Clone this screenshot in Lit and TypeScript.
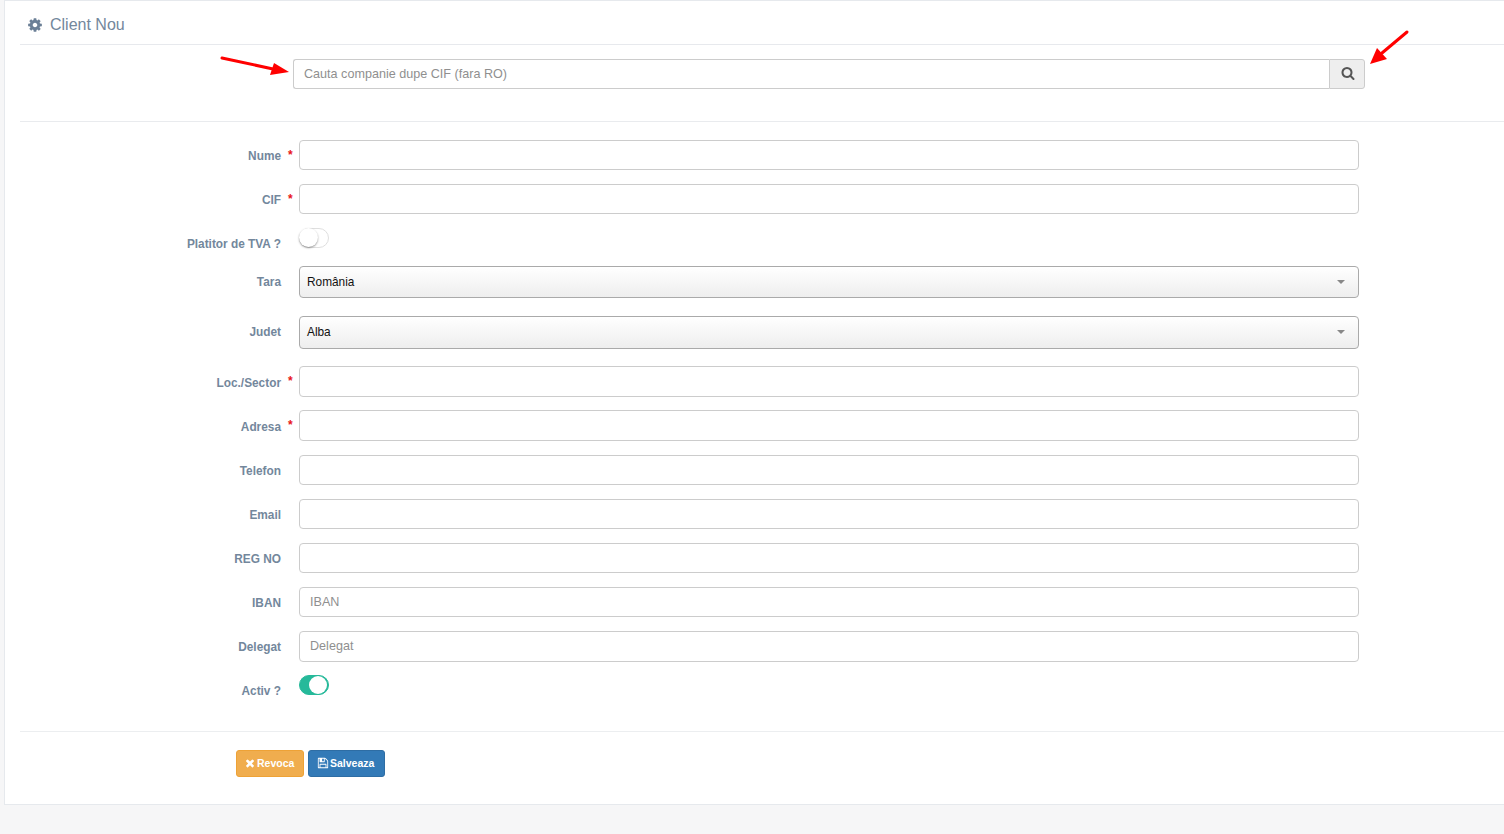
import { LitElement, html, css, svg } from "lit";
import { customElement } from "lit/decorators.js";

const COG = "M1152 896q0-106-75-181t-181-75-181 75-75 181 75 181 181 75 181-75 75-181zm512-109v222q0 12-8 23t-20 13l-185 28q-19 54-39 91 35 50 107 138 10 12 10 25t-9 23q-27 37-99 108t-94 71q-12 0-26-9l-138-108q-44 23-91 38-16 136-29 186-7 28-36 28h-222q-14 0-24.500-8.500t-11.500-21.500l-28-184q-49-16-90-37l-141 107q-10 9-25 9-14 0-25-11-126-114-165-168-7-10-7-23 0-12 8-23 15-21 51-66.500t54-70.500q-27-50-41-99l-183-27q-13-2-21-12.500t-8-23.500v-222q0-12 8-23t19-13l186-28q14-46 39-92-40-57-107-138-10-12-10-24 0-10 9-23 26-36 98.500-107.500t94.500-71.500q13 0 26 10l138 107q44-23 91-38 16-136 29-186 7-28 36-28h222q14 0 24.500 8.500t11.500 21.500l28 184q49 16 90 37l142-107q9-9 24-9 13 0 25 10 129 119 165 170 7 8 7 22 0 12-8 23-15 21-51 66.500t-54 70.500q26 50 41 98l183 28q13 2 21 12.500t8 23.500z";
const SEARCH = "M1216 832q0-185-131.500-316.500t-316.500-131.500-316.500 131.500-131.500 316.500 131.500 316.500 316.500 131.500 316.500-131.500 131.500-316.500zm512 832q0 52-38 90t-90 38q-54 0-90-38l-343-342q-179 124-399 124-143 0-273.500-55.500t-225-150-150-225-55.500-273.500 55.500-273.500 150-225 225-150 273.500-55.500 273.500 55.500 225 150 150 225 55.500 273.500q0 220-124 399l343 343q37 37 37 90z";
const TIMES = "M1490 1322q0 40-28 68l-136 136q-28 28-68 28t-68-28l-294-294-294 294q-28 28-68 28t-68-28l-136-136q-28-28-28-68t28-68l294-294-294-294q-28-28-28-68t28-68l136-136q28-28 68-28t68 28l294 294 294-294q28-28 68-28t68 28l136 136q28 28 28 68t-28 68l-294 294 294 294q28 28 28 68z";
const SAVE = "M512 1536h768v-384h-768v384zm896 0h128v-896q0-14-10-38.500t-20-34.500l-281-281q-10-10-34-20t-39-10v416q0 40-28 68t-68 28h-576q-40 0-68-28t-28-68v-416h-128v1280h128v-416q0-40 28-68t68-28h832q40 0 68 28t28 68v416zm-384-928v-320q0-13-9.500-22.500t-22.500-9.500h-192q-13 0-22.500 9.500t-9.500 22.500v320q0 13 9.500 22.500t22.500 9.500h192q13 0 22.500-9.500t9.500-22.500zm640 32v928q0 40-28 68t-68 28h-1344q-40 0-68-28t-28-68v-1344q0-40 28-68t68-28h928q40 0 88 20t76 48l280 280q28 28 48 76t20 88z";

const fa = (d: string, cls: string) => svg`<svg class=${cls} viewBox="0 0 1792 1792" aria-hidden="true"><path fill="currentColor" d=${d}/></svg>`;

@customElement("app-root")
export class AppRoot extends LitElement {
  static styles = css`
    :host { display: block; height: 834px; background: #f6f6f7; font-family: "Liberation Sans", Arial, sans-serif; overflow: hidden; }
    * { box-sizing: border-box; }
    .card { position: relative; margin-left: 4px; height: 805px; background: #fff; border: 1px solid #e6e9ed; border-right: 0; padding-left: 15px; }
    .head { height: 44px; border-bottom: 1px solid #e7e9ed; display: flex; align-items: center; padding: 4px 0 0 7px; gap: 7px; color: #73879c; font-size: 16px; }
    .cog { width: 16px; height: 16px; color: #6b7f96; }
    .search-band { height: 77px; border-bottom: 1px solid #e9ebee; padding: 14px 0 0 273px; }
    .search { display: flex; width: 1072px; height: 30px; }
    .search input { flex: 1; min-width: 0; height: 30px; border: 1px solid #ccc; border-right: 0; border-radius: 3px 0 0 3px; padding: 0 10px 1px 10px; font: 12.6px "Liberation Sans", Arial, sans-serif; outline: none; }
    input::placeholder { color: #8f8f8f; opacity: 1; }
    .search button { width: 36px; height: 30px; padding: 0 0 2px 1px; border: 1px solid #ccc; border-radius: 0 3px 3px 0; background: #eee; color: #555; display: flex; align-items: center; justify-content: center; }
    .mag { width: 14px; height: 14px; }
    .form { padding-top: 18px; height: 610px; border-bottom: 1px solid #eceef0; }
    .row { display: flex; align-items: flex-start; height: 30px; margin-bottom: 14px; }
    .row.h24 { height: 24px; }
    .row.sel1 { height: 32px; margin-bottom: 18px; }
    .row.sel2 { height: 33px; margin-bottom: 17px; }
    .row.loc { height: 31px; margin-bottom: 13px; }
    .row.adr { height: 31px; }
    .row.del { height: 31px; margin-bottom: 13px; }
    .lbl { width: 261px; padding-top: 8px; line-height: 17px; text-align: right; font-size: 11.85px; font-weight: 700; color: #73879c; }
    .loc .lbl, .adr .lbl { padding-top: 9px; }
    .star-slot { width: 18px; padding: 7px 0 0 7px; line-height: 17px; font-size: 12px; font-weight: 700; color: #e8141c; }
    .ctrl { width: 1060px; height: 100%; }
    .ctrl input { display: block; width: 100%; height: 100%; border: 1px solid #ccc; border-radius: 4px; padding: 0 10px 1px; background: #fff; font: 12.6px "Liberation Sans", Arial, sans-serif; outline: none; }
    .select { height: 100%; border: 1px solid #aaa; border-radius: 4px; background: linear-gradient(#fff, #eeeeee); padding-left: 7px; display: flex; align-items: center; justify-content: space-between; padding-right: 13px; font-size: 11.85px; color: #111; }
    .sel2 .select { padding-bottom: 2px; }
    .caret { width: 0; height: 0; border: 4px solid transparent; border-top: 4px solid #888; border-bottom: 0; }
    .toggle { width: 30px; height: 20px; border-radius: 20px; border: 1px solid #dfdfdf; background: #fff; position: relative; }
    .knob { position: absolute; left: -1px; top: -1px; width: 19px; height: 19px; border-radius: 50%; background: #fff; box-shadow: 0 1px 2px rgba(0,0,0,.4); }
    .toggle.on { background: #26b99a; border-color: #26b99a; }
    .toggle.on .knob { left: 9px; top: 0; width: 18px; height: 18px; box-shadow: none; }
    .actions { display: flex; gap: 4px; padding: 18px 0 0 216px; }
    .btn { height: 27px; border-radius: 3px; border: 1px solid; color: #fff; font-size: 10.5px; font-weight: 700; display: flex; align-items: center; gap: 1px; padding: 0 0 2px 7px; font-family: inherit; }
    .btn svg { width: 12px; height: 12px; }
    .warn { background: #f0ad4e; border-color: #eea236; width: 68px; }
    .prim { background: #337ab7; border-color: #2e6da4; width: 77px; padding-left: 8px; }
    .arrow { position: absolute; left: 0; top: 0; pointer-events: none; }
  `;

  private field(label: string, star = false, cls = "", ph = "") {
    return html`<div class="row ${cls}">
      <div class="lbl">${label}</div>
      <div class="star-slot">${star ? "*" : ""}</div>
      <div class="ctrl"><input type="text" placeholder=${ph} /></div>
    </div>`;
  }

  private select(label: string, value: string, cls: string) {
    return html`<div class="row ${cls}">
      <div class="lbl">${label}</div>
      <div class="star-slot"></div>
      <div class="ctrl"><div class="select"><span>${value}</span><span class="caret"></span></div></div>
    </div>`;
  }

  private toggle(label: string, on: boolean) {
    return html`<div class="row h24">
      <div class="lbl">${label}</div>
      <div class="star-slot"></div>
      <div class="toggle ${on ? "on" : ""}"><span class="knob"></span></div>
    </div>`;
  }

  render() {
    return html`<div class="card">
      <div class="head">${fa(COG, "cog")}<span>Client Nou</span></div>
      <div class="search-band">
        <div class="search">
          <input type="text" placeholder="Cauta companie dupe CIF (fara RO)" />
          <button>${fa(SEARCH, "mag")}</button>
        </div>
      </div>
      <div class="form">
        ${this.field("Nume", true)}
        ${this.field("CIF", true)}
        ${this.toggle("Platitor de TVA ?", false)}
        ${this.select("Tara", "România", "sel1")}
        ${this.select("Judet", "Alba", "sel2")}
        ${this.field("Loc./Sector", true, "loc")}
        ${this.field("Adresa", true, "adr")}
        ${this.field("Telefon")}
        ${this.field("Email")}
        ${this.field("REG NO")}
        ${this.field("IBAN", false, "", "IBAN")}
        ${this.field("Delegat", false, "del", "Delegat")}
        ${this.toggle("Activ ?", true)}
      </div>
      <div class="actions">
        <button class="btn warn">${fa(TIMES, "")}Revoca</button>
        <button class="btn prim">${fa(SAVE, "")}Salveaza</button>
      </div>
      <svg class="arrow" width="1500" height="100" viewBox="4 0 1500 100">
        <line x1="221" y1="57" x2="272" y2="68" stroke="#f00" stroke-width="3" stroke-linecap="round"/>
        <polygon points="288,71 269,74 273,62" fill="#f00"/>
        <line x1="1406" y1="31" x2="1381" y2="52" stroke="#f00" stroke-width="3" stroke-linecap="round"/>
        <polygon points="1369,63 1376,47 1386,58" fill="#f00"/>
      </svg>
    </div>`;
  }
}
